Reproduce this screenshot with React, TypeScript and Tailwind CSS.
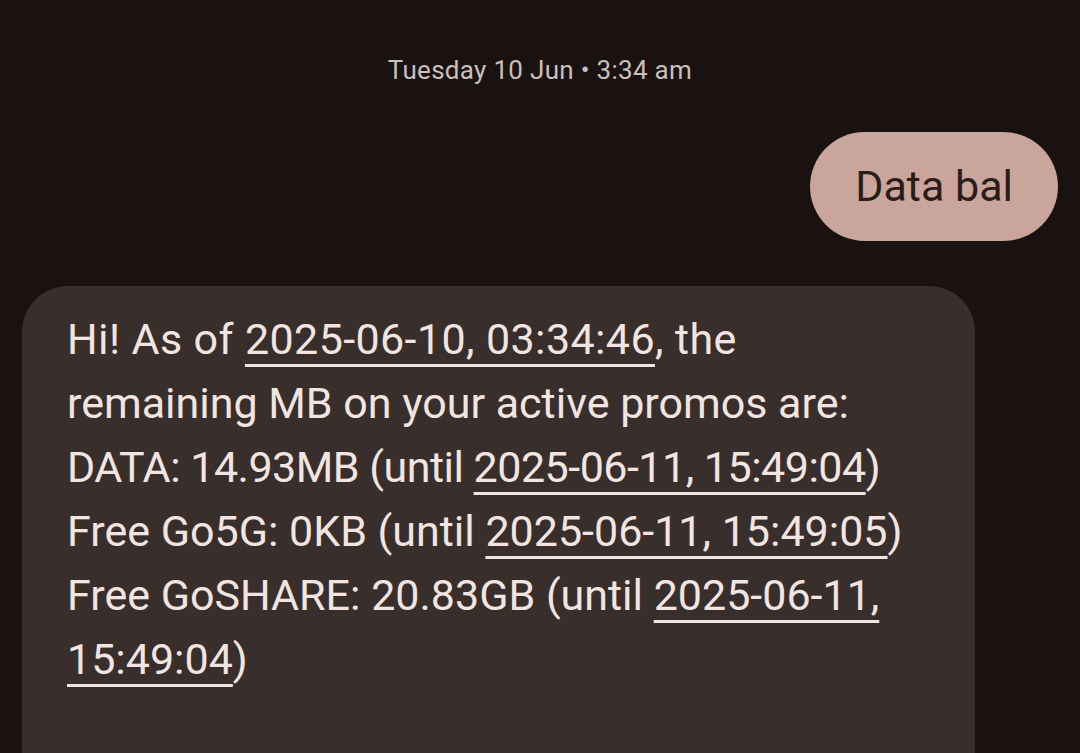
export default function App() {
  const u = "underline decoration-[3px] underline-offset-[10px]";
  return (
    <div className="w-[1080px] h-[753px] overflow-hidden bg-[#1a1210] flex flex-col" style={{ fontFamily: "Roboto, 'Noto Sans', sans-serif" }}>
      <div className="pt-[54px] text-center text-[26px] leading-[32px] text-[#cbbfba] tracking-[0.3px]">
        Tuesday 10 Jun • 3:34 am
      </div>
      <div className="flex justify-end pr-[22px] pt-[46px]">
        <div className="h-[109px] px-[45px] rounded-full bg-[#c9a59c] text-[#2a1c18] text-[43px] flex items-center">
          Data bal
        </div>
      </div>
      <div className="pl-[22px] pt-[45px]">
        <div className="w-[953px] h-[520px] rounded-[46px] bg-[#382f2d] text-[#f2e4e0] px-[45px] pt-[21px] text-[43px] leading-[64px]">
          <div className="whitespace-nowrap tracking-[0.4px]">Hi! As of <span className={u}>2025-06-10, 03:34:46</span>, the</div>
          <div className="whitespace-nowrap">remaining MB on your active promos are:</div>
          <div className="whitespace-nowrap tracking-[-0.5px]">DATA: 14.93MB (until <span className={u}>2025-06-11, 15:49:04</span>)</div>
          <div className="whitespace-nowrap">Free Go5G: 0KB (until <span className={u}>2025-06-11, 15:49:05</span>)</div>
          <div className="whitespace-nowrap">Free GoSHARE: 20.83GB (until <span className={u}>2025-06-11,</span></div>
          <div className="whitespace-nowrap"><span className={u}>15:49:04</span>)</div>
        </div>
      </div>
    </div>
  );
}
